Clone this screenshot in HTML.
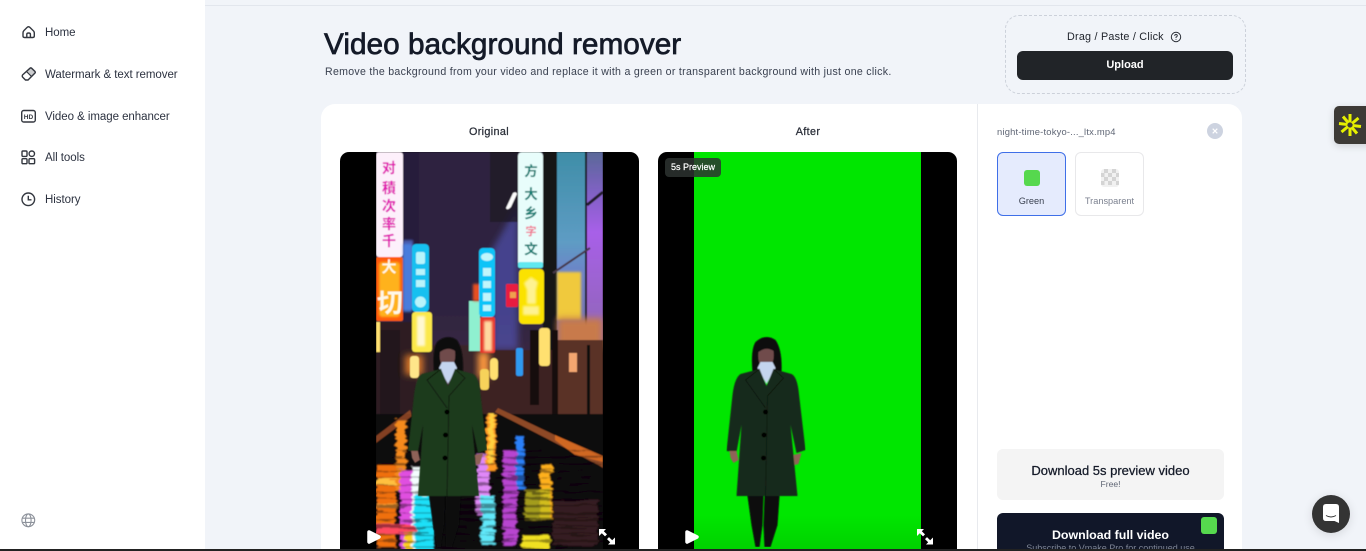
<!DOCTYPE html>
<html lang="en"><head><meta charset="utf-8"><title>Video background remover</title>
<style>
*{box-sizing:border-box}
html,body{margin:0;width:1366px;height:551px;overflow:hidden;background:#f1f4f9;font-family:"Liberation Sans","Noto Sans CJK SC",sans-serif;color:#1c2230}
#w{position:relative;width:1366px;height:551px;overflow:hidden}
.a{position:absolute;white-space:nowrap}
.nav{left:45px;font-size:11.5px;line-height:14px;color:#2c3240;letter-spacing:-.05px}
.c{text-align:center}
svg{position:absolute;overflow:hidden}
</style></head><body><div id="w">
<div class="a" style="left:205px;top:5px;width:1161px;height:1px;background:#e2e6ed"></div>
<div class="a" style="left:0;top:0;width:205px;height:551px;background:#fff"></div>
<div class="a nav" style="top:26px">Home</div>
<div class="a nav" style="top:68px">Watermark &amp; text remover</div>
<div class="a nav" style="top:110px">Video &amp; image enhancer</div>
<div class="a nav" style="top:151px">All tools</div>
<div class="a nav" style="top:193px">History</div>
<svg style="left:0;top:0" width="44" height="551" viewBox="0 0 44 551" fill="none" stroke="#33373f" stroke-width="1.4">
<path d="M23 33 Q23 31.500 24 30.500 L27 27.500 Q28.500 26 30 27.500 L33 30.500 Q34.300 31.500 34.300 33 V36 Q34.300 37.500 32.800 37.500 H24.500 Q23 37.500 23 36 Z"/><path d="M26.800 37.500 V34.200 Q26.800 33 28.600 33 Q30.400 33 30.400 34.200 V37.500"/>
<path d="M22.500 75 L30 68.200 Q30.800 67.600 31.600 68.200 L35 71.500 Q35.600 72.300 35 73 L28 80 H25.500 L22.500 77 Q22 75.700 22.500 75Z"/><path d="M26.500 71.500 L31.500 76.500" stroke-width="1.200"/><path d="M27 71 L30.500 67.800 L35 72.300 L31.500 76Z" fill="#33373f" stroke="none" opacity=".25"/>
<rect x="21.700" y="110.500" width="13.600" height="11.500" rx="2"/><text x="28.500" y="119" font-family="Liberation Sans" font-size="6.500" font-weight="700" fill="#33373f" stroke="none" text-anchor="middle">HD</text>
<rect x="22" y="151" width="5" height="5.400" rx="1"/><circle cx="31.800" cy="153.700" r="2.700"/><rect x="22" y="158.700" width="5" height="5" rx="1"/><rect x="29" y="158.700" width="5.600" height="5" rx="1"/>
<circle cx="28.300" cy="199.300" r="6.300"/><path d="M28.300 195.800 V199.800 H31.500"/>
<g stroke="#8d929b" stroke-width="1.100"><circle cx="28.300" cy="520.300" r="6.400"/><ellipse cx="28.300" cy="520.300" rx="2.800" ry="6.400"/><path d="M22 518.200 H34.600 M22 522.400 H34.600"/></g>
</svg>

<div class="a" style="left:324px;top:27px;font-size:29.8px;line-height:36px;color:#141a28;-webkit-text-stroke:.7px #141a28">Video background remover</div>
<div class="a" style="left:325px;top:66px;font-size:10.6px;line-height:13px;color:#3a4150;letter-spacing:.29px">Remove the background from your video and replace it with a green or transparent background with just one click.</div>

<div class="a" style="left:1005px;top:15px;width:241px;height:79px;border:1px dashed #ccd1da;border-radius:14px"></div>
<div class="a" style="left:1067px;top:30px;font-size:10.8px;line-height:14px;color:#20242c;letter-spacing:.22px">Drag / Paste / Click</div>
<svg style="left:1170px;top:31px" width="12" height="12" viewBox="0 0 12 12" fill="none" stroke="#2a2e36"><circle cx="6" cy="6" r="4.700"/><path d="M4.600 4.800 Q4.800 3.500 6 3.500 Q7.400 3.600 7.300 4.800 Q7.200 5.600 6 6.200 V7" stroke-width=".9"/><circle cx="6" cy="8.400" r=".5" fill="#2a2e36" stroke="none"/></svg>
<div class="a c" style="left:1017px;top:51px;width:216px;height:29px;line-height:29px;background:#212428;border-radius:6px;color:#fff;font-size:11px;font-weight:700">Upload</div>

<div class="a" style="left:321px;top:104px;width:921px;height:460px;background:#fff;border-radius:14px"></div>
<div class="a" style="left:977px;top:104px;width:1px;height:447px;background:#e8eaee"></div>
<div class="a c" style="left:439px;top:125px;width:100px;font-size:10.8px;line-height:14px;color:#2a2e38;letter-spacing:.35px;-webkit-text-stroke:.25px #2a2e38">Original</div>
<div class="a c" style="left:758px;top:125px;width:100px;font-size:10.8px;line-height:14px;color:#2a2e38;letter-spacing:.35px;-webkit-text-stroke:.25px #2a2e38">After</div>

<svg style="left:0;top:0" width="1366" height="551" viewBox="0 0 1366 551">
<defs>
<clipPath id="cl"><rect x="376" y="152" width="227" height="400"/></clipPath>
<filter id="s" x="0" y="0" width="100%" height="100%"><feGaussianBlur stdDeviation=".4"/></filter>
<filter id="b1" x="-30%" y="-30%" width="160%" height="160%"><feGaussianBlur stdDeviation="1"/></filter>
<filter id="b3" x="-50%" y="-50%" width="200%" height="200%"><feGaussianBlur stdDeviation="3.500"/></filter>
<filter id="wave" x="-10%" y="0" width="120%" height="100%"><feTurbulence type="fractalNoise" baseFrequency=".03 .3" numOctaves="2" seed="7"/><feDisplacementMap in="SourceGraphic" scale="8" xChannelSelector="R" yChannelSelector="G"/><feGaussianBlur stdDeviation=".6"/></filter>
<linearGradient id="sky" x1="0" y1="0" x2="0" y2="1"><stop offset="0" stop-color="#2d2340"/><stop offset=".6" stop-color="#2e2440"/><stop offset="1" stop-color="#4a2f48"/></linearGradient>
<linearGradient id="tl" x1="0" y1="0" x2="0" y2="1"><stop offset="0" stop-color="#3f8ea8"/><stop offset=".45" stop-color="#5e9cc4"/><stop offset=".6" stop-color="#6d84c8"/><stop offset="1" stop-color="#7c68a0"/></linearGradient>
<linearGradient id="pr" x1="0" y1="0" x2="0" y2="1"><stop offset="0" stop-color="#5a6898"/><stop offset=".2" stop-color="#8062c4"/><stop offset=".4" stop-color="#a860e8"/><stop offset="1" stop-color="#8c68b0"/></linearGradient>
<linearGradient id="fade" x1="0" y1="0" x2="0" y2="1"><stop offset="0" stop-opacity="0"/><stop offset="1" stop-opacity=".45"/></linearGradient>
<pattern id="bd" width="8" height="7" patternUnits="userSpaceOnUse"><rect y="1" width="8" height="2" fill="#0b0608"/></pattern>
<g id="p">
<path d="M434 372 Q432 350 437 342 Q447 333 457 340 Q464 350 463 372 Z" fill="#0c090c"/>
<path d="M440 352 Q448 346 455 351 Q456 360 453 364 Q447 371 442 365 Q439 360 440 352Z" fill="#6f4c4c"/>
<path d="M439 368 L448 384 L457 368 L454 362 L442 362Z" fill="#c4d4ee"/>
<path d="M441 369 L448 386 L455 369 L473 374 Q478 376 480 390 L487 450 L478 453 L472 425 L479 496 H418 L423 425 L418 452 L408 451 L414 395 Q416 378 422 374Z" fill="currentColor"/>
<path d="M441 369 L427 380 L447 408 M455 369 L465 378 L449 396 L447 496" fill="none" stroke="#0b140a" stroke-width=".8"/>
<circle cx="447" cy="412" r="2.400" fill="#050505"/><circle cx="445.500" cy="435" r="2.400" fill="#050505"/><circle cx="445" cy="458" r="2.400" fill="#050505"/>
<path d="M411 451 L418 451 L420 460 L415 463 L412 458Z M475 455 L483 453 L480 464 L476 465Z" fill="#8f6258"/>
<path d="M429 496 H445 L444 525 L441 547 H437 L433 525Z M446 496 H461 L459 525 L452 547 H446 L445 525Z" fill="#070708"/>
</g>
</defs>

<rect x="340" y="152" width="299" height="420" rx="9" fill="#000"/>
<g clip-path="url(#cl)"><g filter="url(#s)">
<rect x="376" y="152" width="227" height="262" fill="url(#sky)"/>
<rect x="403" y="152" width="16" height="190" fill="#241a38" opacity=".8"/>
<rect x="403" y="240" width="10" height="70" fill="#5a78e0" opacity=".7" filter="url(#b1)"/>
<path d="M492 350 V250 L518 205 V350Z" fill="#5558c0" opacity=".6" filter="url(#b3)"/>
<rect x="490" y="152" width="28" height="70" fill="#1e1826" opacity=".75"/>
<rect x="543" y="152" width="60" height="270" fill="#121318"/>
<rect x="557" y="152" width="28" height="200" fill="url(#tl)"/>
<rect x="587" y="152" width="16" height="200" fill="url(#pr)"/>
<path d="M587 205 L603 192" stroke="#221c2a" stroke-width="3"/>
<path d="M553 273 L590 248" stroke="#46384a" stroke-width="2"/>
<rect x="557" y="272" width="24" height="48" fill="#f0c93c" filter="url(#b1)"/>
<rect x="557" y="318" width="46" height="30" fill="#c87a4c" filter="url(#b3)"/>

<rect x="376" y="322" width="40" height="95" fill="#2e1e22"/>
<rect x="416" y="345" width="64" height="72" fill="#3a262a"/>
<rect x="480" y="350" width="123" height="64" fill="#3e2424"/>
<rect x="556" y="340" width="47" height="74" fill="#5a3028"/>
<rect x="376" y="322" width="4" height="30" fill="#ffe070"/>
<rect x="380" y="330" width="20" height="85" fill="#21131a"/>
<rect x="405" y="355" width="18" height="20" fill="#ff8a2a" filter="url(#b3)" opacity=".8"/>
<rect x="410" y="356" width="9" height="22" rx="3" fill="#ffe68a"/>
<rect x="478" y="352" width="11" height="26" fill="#ff9a40" filter="url(#b3)"/>
<rect x="490" y="358" width="8" height="22" rx="4" fill="#ffe070"/>
<rect x="480" y="369" width="9" height="21" rx="3" fill="#f7d25a"/>
<rect x="516" y="348" width="7" height="28" rx="2" fill="#2e9af0"/>
<rect x="530" y="330" width="9" height="75" fill="#170c0e"/>
<rect x="552" y="330" width="6" height="85" fill="#180e10"/>
<rect x="539" y="328" width="11" height="38" rx="3" fill="#ffe070"/>
<rect x="569" y="353" width="8" height="19" fill="#f4a670"/>
<rect x="587" y="345" width="3" height="75" fill="#10090c"/>

<rect x="376" y="152" width="27" height="105" rx="3" fill="#fdf0fb"/>
<rect x="376" y="257" width="27" height="64" rx="2" fill="#ff5a0a"/>
<rect x="379" y="262" width="21" height="55" rx="3" fill="#ffb21c" filter="url(#b1)"/>
<g font-family="Noto Sans CJK SC" font-size="14" font-weight="700" text-anchor="middle" fill="#e010b0"><text x="389" y="173">对</text><text x="389" y="193">積</text><text x="389" y="211">次</text><text x="389" y="229">率</text><text x="389" y="246">千</text></g>
<g font-family="Noto Sans CJK SC" font-weight="700" text-anchor="middle" fill="#fff8e8"><text x="389" y="272" font-size="15">大</text><text x="390" y="312" font-size="26">切</text></g>
<rect x="403" y="244" width="9" height="68" fill="#4a8af0" opacity=".7" filter="url(#b1)"/>
<rect x="412" y="244" width="17" height="68" rx="4" fill="#12c0f0"/>
<g fill="#b8f4fb"><rect x="416" y="252" width="9" height="12" rx="2"/><rect x="416" y="269" width="9" height="6"/><rect x="416" y="280" width="9" height="7"/><circle cx="420.500" cy="302" r="5.500"/></g>
<rect x="412" y="312" width="20" height="40" rx="3" fill="#fbe84a"/>
<rect x="417" y="316" width="8" height="30" fill="#fff8d0" filter="url(#b1)"/>
<rect x="469" y="301" width="11" height="50" fill="#8ff0d0"/>
<rect x="473" y="284" width="7" height="17" fill="#e85020" filter="url(#b1)"/>
<rect x="479" y="248" width="16" height="69" rx="4" fill="#10c4f8"/>
<g fill="#c0f6fb"><ellipse cx="487" cy="257" rx="6" ry="4"/><rect x="483" y="268" width="8" height="8"/><rect x="483" y="281" width="8" height="7"/><rect x="483" y="293" width="8" height="8"/><rect x="483" y="305" width="8" height="6"/></g>
<rect x="480" y="317" width="15" height="36" rx="2" fill="#e8382c"/>
<rect x="484" y="321" width="8" height="30" fill="#ffd8a0" filter="url(#b1)"/>
<rect x="506" y="284" width="12" height="23" rx="1" fill="#e81c40"/>
<rect x="510" y="292" width="6" height="6" fill="#f0a050"/>
<rect x="518" y="152" width="25" height="116" rx="4" fill="#e8fdfb"/>
<rect x="518" y="262" width="25" height="6" rx="2" fill="#60e8f0"/>
<g font-family="Noto Sans CJK SC" font-size="13.500" font-weight="700" text-anchor="middle" fill="#0a7a70"><text x="531" y="176">方</text><text x="531" y="199">大</text><text x="531" y="218">乡</text><text x="531" y="235" font-size="11" fill="#f07890">字</text><text x="531" y="254">文</text></g>
<rect x="519" y="269" width="25" height="55" rx="4" fill="#fbe200"/>
<path d="M531 277 L538 282 L536 290 V304 H527 V290 L524 283Z M523 306 H539 V315 H523Z" fill="#fff8c0" opacity=".75" filter="url(#b1)"/>
<path d="M506 208 L513 193 Q516 191 517 194 L511 207 Q507 211 506 208Z" fill="#fdfdfd"/>

<rect x="376" y="414" width="227" height="136" fill="#0f090b"/>
<path d="M376 436 L410 410 L412 416 L376 443Z" fill="#a05028" opacity=".8"/>
<path d="M498 408 L603 458 V468 L600 466 L495 412Z" fill="#8e4a28"/>
<path d="M555 435 L603 456 V462 L575 455 L555 440Z" fill="#d76a24" opacity=".9"/>
<g filter="url(#wave)">
<rect x="376" y="465" width="20" height="85" fill="#f0700e"/>
<rect x="396" y="420" width="10" height="70" fill="#f58a1a"/>
<rect x="400" y="470" width="16" height="80" fill="#e050e0"/>
<rect x="404" y="530" width="12" height="20" fill="#ffd020"/>
<rect x="412" y="465" width="18" height="85" fill="#f4feff"/>
<rect x="414" y="495" width="20" height="55" fill="#1ce0f8"/>
<rect x="376" y="525" width="40" height="8" fill="#ff4a60"/>
<rect x="476" y="455" width="14" height="60" fill="#e088f8"/>
<rect x="481" y="495" width="14" height="50" fill="#60e8fa"/>
<rect x="486" y="415" width="10" height="55" fill="#ff9a20"/><rect x="489" y="413" width="5" height="50" fill="#ffd040"/>
<rect x="503" y="450" width="14" height="95" fill="#b844d0"/>
<rect x="516" y="435" width="8" height="55" fill="#2a80f8"/>
<rect x="540" y="465" width="12" height="55" fill="#ffb01a"/>
<rect x="525" y="490" width="25" height="30" fill="#c8c020" opacity=".8"/>
<rect x="522" y="535" width="28" height="14" fill="#f0e020"/>
<rect x="376" y="480" width="20" height="5" fill="#ffc040"/><rect x="376" y="503" width="22" height="4" fill="#ffa030"/>
<rect x="553" y="500" width="45" height="45" fill="#5a2c38" opacity=".5"/>
<rect x="376" y="450" width="227" height="100" fill="url(#bd)" opacity=".4"/>
</g>
</g></g>
<g filter="url(#s)"><use href="#p" color="#1d3a1b"/></g>

<rect x="658" y="152" width="299" height="420" rx="9" fill="#000"/>
<rect x="694" y="152" width="227" height="399" fill="#00e600"/>
<rect x="694" y="515" width="227" height="35" fill="url(#fade)" opacity=".2"/>
<g filter="url(#s)"><use href="#p" x="318.500" color="#182a1a"/></g>

<g fill="#fff" stroke="#fff" stroke-width="3.500" stroke-linejoin="round"><path d="M369 532 L379 537 L369 542Z"/><path d="M687 532 L697 537 L687 542Z"/></g>
<g id="ex" fill="#fff"><path d="M599 529 H606 L603.800 531.200 L607 534.400 L605 536.400 L601.800 533.200 L599 536Z"/><path d="M615 544.500 H608 L610.200 542.300 L607 539.100 L609 537.100 L612.200 540.300 L615 537.500Z"/></g>
<use href="#ex" x="318"/>
</svg>

<div class="a c" style="left:665px;top:158px;width:56px;height:19px;line-height:19px;background:rgba(45,50,48,.85);border-radius:4px;color:#fff;font-size:9px;-webkit-text-stroke:.2px #fff">5s Preview</div>

<div class="a" style="left:997px;top:125px;font-size:9.4px;line-height:13px;color:#5f6675;letter-spacing:.2px">night-time-tokyo-..._ltx.mp4</div>
<div class="a" style="left:1207px;top:123px;width:16px;height:16px;border-radius:50%;background:#cdd3e0"></div>
<svg style="left:1207px;top:123px" width="16" height="16"><path d="M5.700 5.700 L10.300 10.300 M10.300 5.700 L5.700 10.300" stroke="#fff" stroke-width="1.200"/></svg>

<div class="a" style="left:997px;top:152px;width:69px;height:64px;background:#e5ebfd;border:1px solid #3f6fe8;border-radius:6px"></div>
<div class="a" style="left:1024px;top:170px;width:16px;height:16px;background:#56d84e;border-radius:3px"></div>
<div class="a c" style="left:997px;top:195px;width:69px;font-size:9.200px;line-height:13px;color:#3a4150">Green</div>
<div class="a" style="left:1075px;top:152px;width:69px;height:64px;background:#fff;border:1px solid #e8e8ea;border-radius:6px"></div>
<svg style="left:1101px;top:169px" width="18" height="18" viewBox="0 0 18 18"><defs><clipPath id="ck"><rect width="18" height="18" rx="3"/></clipPath></defs><g clip-path="url(#ck)"><rect width="18" height="18" fill="#f1f1f1"/><g fill="#d4d4d4"><rect x="3" width="4" height="4"/><rect x="11" width="4" height="4"/><rect y="4" width="3.500" height="4"/><rect x="7" y="4" width="4" height="4"/><rect x="15" y="4" width="3" height="4"/><rect x="3" y="8" width="4" height="4"/><rect x="11" y="8" width="4" height="4"/><rect y="12" width="3.500" height="4"/><rect x="7" y="12" width="4" height="4"/><rect x="15" y="12" width="3" height="4"/></g></g></svg>
<div class="a c" style="left:1075px;top:195px;width:69px;font-size:9.200px;line-height:13px;color:#7c8290">Transparent</div>

<div class="a" style="left:997px;top:449px;width:227px;height:51px;background:#f4f4f4;border-radius:6px"></div>
<div class="a c" style="left:997px;top:463px;width:227px;font-size:13px;line-height:16px;color:#141a28;-webkit-text-stroke:.25px #141a28">Download 5s preview video</div>
<div class="a c" style="left:997px;top:478px;width:227px;font-size:8.600px;line-height:12px;color:#606674">Free!</div>
<div class="a" style="left:997px;top:513px;width:227px;height:40px;background:#111729;border-radius:6px 6px 0 0"></div>
<div class="a" style="left:1201px;top:517px;width:16px;height:17px;background:#56d84e;border-radius:3px"></div>
<div class="a c" style="left:997px;top:527px;width:227px;font-size:12.400px;line-height:16px;color:#fff;font-weight:700">Download full video</div>
<div class="a c" style="left:997px;top:542px;width:227px;font-size:9px;line-height:12px;color:#7d8494">Subscribe to Vmake Pro for continued use</div>

<div class="a" style="left:1334px;top:106px;width:40px;height:38px;background:#3d3a36;border-radius:5px;box-shadow:0 2px 8px rgba(0,0,0,.15)"></div>
<svg style="left:1338px;top:113px" width="24" height="24" viewBox="-12 -12 24 24" stroke="#e6f000" stroke-width="3"><path d="M0 -11 V-2.500 M0 11 V2.500 M-11 -1.500 L-2.500 -.5 M11 1.500 L2.500 .5 M-7 -8.500 L-1.500 -2 M7 8.500 L1.500 2 M8.500 -7 L2 -1.500 M-8.500 7 L-2 1.500"/></svg>

<div class="a" style="left:1312px;top:495px;width:38px;height:38px;border-radius:50%;background:#343434;box-shadow:0 2px 10px rgba(0,0,0,.12)"></div>
<svg style="left:1312px;top:495px" width="38" height="38" viewBox="0 0 38 38"><path d="M11 12 Q11 9 14 9 H24 Q27 9 27 12 V28 L22.500 26 H14 Q11 26 11 23Z" fill="#fff"/><path d="M14 20.500 Q19 23.500 24 20.500" fill="none" stroke="#343434" stroke-width="1"/></svg>

<div class="a" style="left:0;top:549px;width:1366px;height:2px;background:#222"></div>
</div></body></html>
